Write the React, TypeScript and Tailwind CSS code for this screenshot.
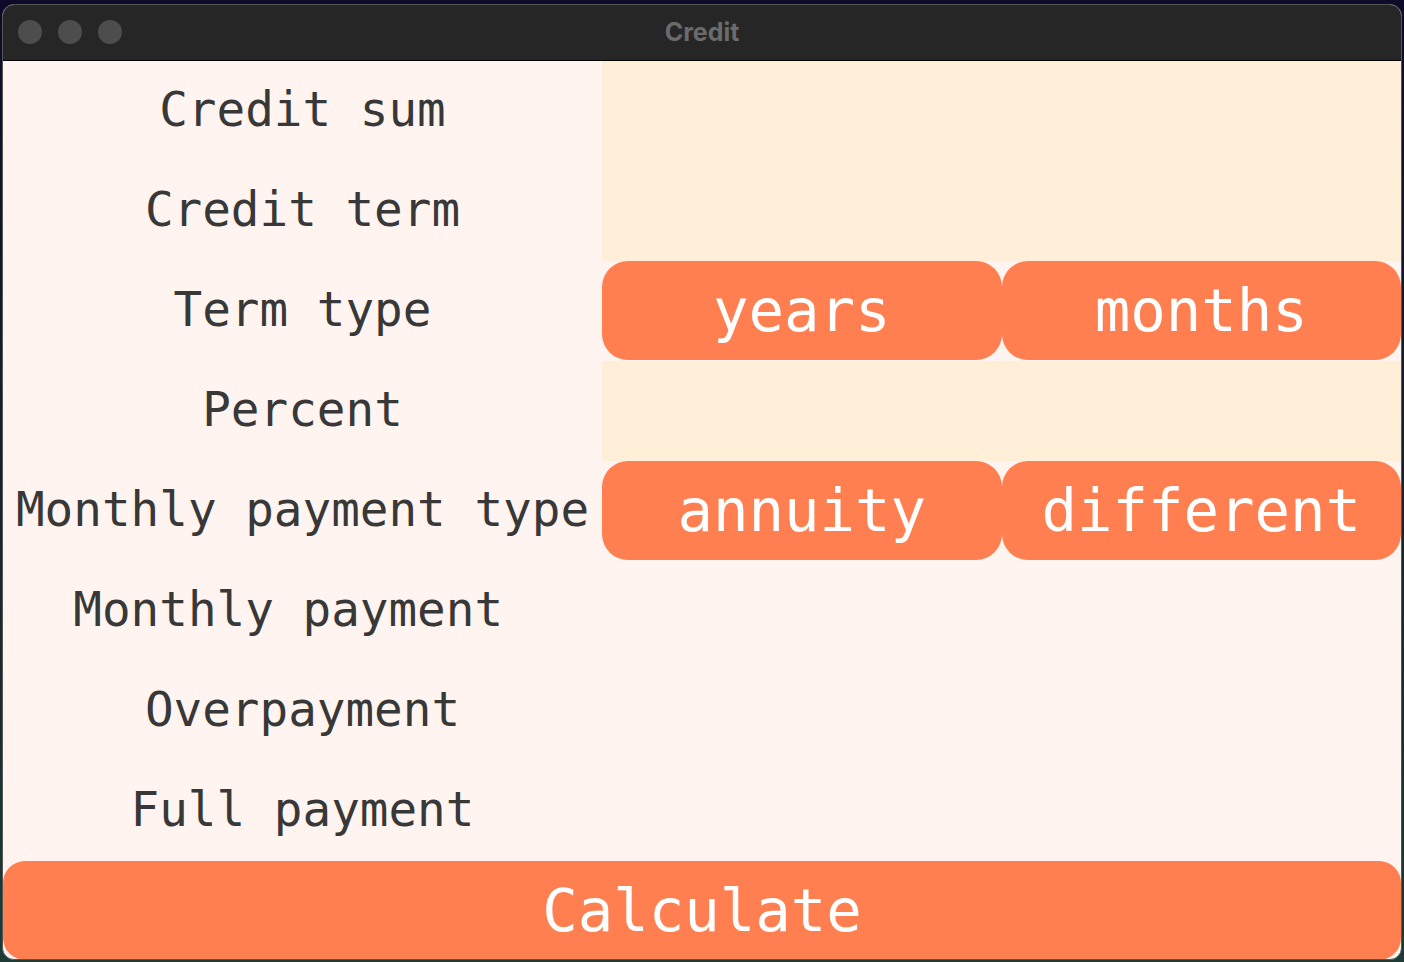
import React from 'react';

const labels = [
  'Credit sum',
  'Credit term',
  'Term type',
  'Percent',
  'Monthly payment type',
  'Monthly payment ',
  'Overpayment',
  'Full payment',
];

const mono = "font-['DejaVu_Sans_Mono','Liberation_Mono',monospace]";

const OrangeButton: React.FC<{ label: string }> = ({ label }) => (
  <button className={`flex-1 h-[99px] rounded-[26px] bg-[#ff7f50] text-white text-[59px] leading-none flex items-center justify-center ${mono}`}>
    {label}
  </button>
);

const App: React.FC = () => {
  return (
    <div className="w-[1404px] h-[962px] bg-gradient-to-b from-[#0d0a2a] to-[#1d3b34] p-[2px] pt-[4px] overflow-hidden">
      <div className="w-[1400px] h-[956px] rounded-[12px] overflow-hidden flex flex-col border border-[#555] bg-[#fff4ef]">
        {/* title bar */}
        <div className="h-[56px] bg-[#262626] relative flex items-center justify-center border-b border-black shrink-0">
          <div className="absolute left-[15px] top-[15px] flex gap-[16px]">
            <span className="w-[24px] h-[24px] rounded-full bg-[#4d4d4d]" />
            <span className="w-[24px] h-[24px] rounded-full bg-[#4d4d4d]" />
            <span className="w-[24px] h-[24px] rounded-full bg-[#4d4d4d]" />
          </div>
          <span className="text-[#6b6b6b] text-[25px] font-bold font-['Inter','Liberation_Sans',sans-serif]">Credit</span>
        </div>

        <div className="flex flex-1">
          {/* labels */}
          <div className="w-[599px] flex flex-col">
            {labels.map((l) => (
              <div key={l} className={`h-[100px] pb-[2px] flex items-center justify-center text-[47.6px] text-[#383838] whitespace-pre ${mono}`}>
                {l}
              </div>
            ))}
          </div>
          {/* fields */}
          <div className="flex-1 flex flex-col">
            <div className="h-[200px] bg-[#ffeed8]" />
            <div className="h-[100px] flex">
              <OrangeButton label="years" />
              <OrangeButton label="months" />
            </div>
            <div className="h-[100px] bg-[#ffeed8]" />
            <div className="h-[100px] flex">
              <OrangeButton label="annuity" />
              <OrangeButton label="different" />
            </div>
          </div>
        </div>

        <button className={`h-[99px] rounded-[22px] bg-[#ff7f50] text-white text-[59px] leading-none flex items-center justify-center shrink-0 ${mono}`}>
          Calculate
        </button>
      </div>
    </div>
  );
};

export default App;
